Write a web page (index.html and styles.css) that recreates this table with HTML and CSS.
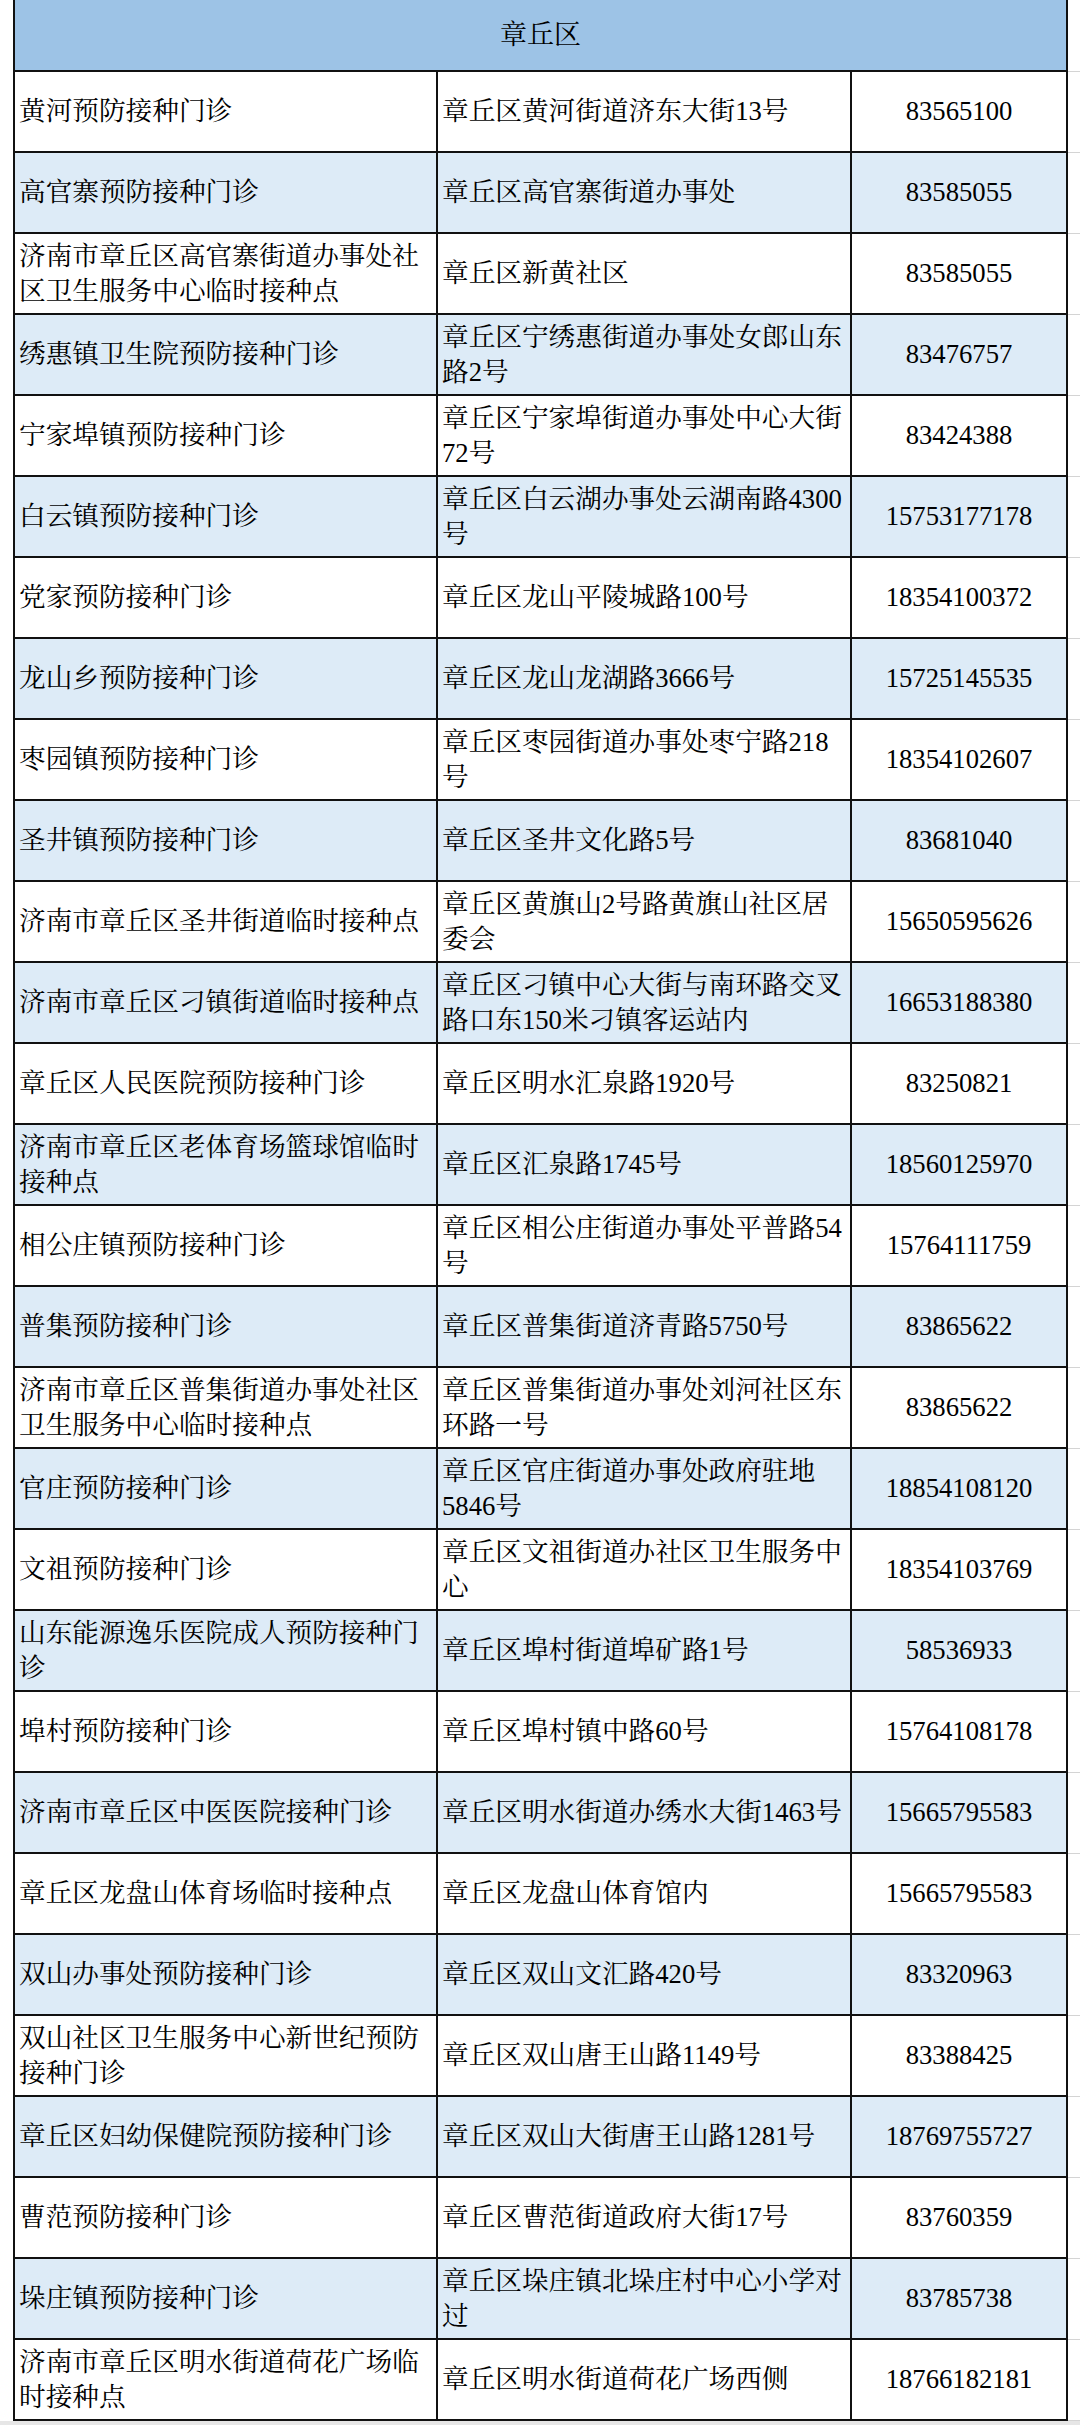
FILE: index.html
```html
<!DOCTYPE html>
<html lang="zh-CN">
<head>
<meta charset="utf-8">
<title>章丘区</title>
<link rel="stylesheet" href="styles.css">
</head>
<body>
<div class="sheet">
  <div class="gutter"></div>
  <table class="grid">
    <colgroup>
      <col class="c-name">
      <col class="c-addr">
      <col class="c-tel">
    </colgroup>
    <thead>
      <tr><th colspan="3" class="title">章丘区</th></tr>
    </thead>
    <tbody>
      <tr><td>黄河预防接种门诊</td><td>章丘区黄河街道济东大街13号</td><td class="tel">83565100</td></tr>
      <tr><td>高官寨预防接种门诊</td><td>章丘区高官寨街道办事处</td><td class="tel">83585055</td></tr>
      <tr><td>济南市章丘区高官寨街道办事处社区卫生服务中心临时接种点</td><td>章丘区新黄社区</td><td class="tel">83585055</td></tr>
      <tr><td>绣惠镇卫生院预防接种门诊</td><td>章丘区宁绣惠街道办事处女郎山东路2号</td><td class="tel">83476757</td></tr>
      <tr><td>宁家埠镇预防接种门诊</td><td>章丘区宁家埠街道办事处中心大街72号</td><td class="tel">83424388</td></tr>
      <tr><td>白云镇预防接种门诊</td><td>章丘区白云湖办事处云湖南路4300号</td><td class="tel">15753177178</td></tr>
      <tr><td>党家预防接种门诊</td><td>章丘区龙山平陵城路100号</td><td class="tel">18354100372</td></tr>
      <tr><td>龙山乡预防接种门诊</td><td>章丘区龙山龙湖路3666号</td><td class="tel">15725145535</td></tr>
      <tr><td>枣园镇预防接种门诊</td><td>章丘区枣园街道办事处枣宁路218号</td><td class="tel">18354102607</td></tr>
      <tr><td>圣井镇预防接种门诊</td><td>章丘区圣井文化路5号</td><td class="tel">83681040</td></tr>
      <tr><td>济南市章丘区圣井街道临时接种点</td><td>章丘区黄旗山2号路黄旗山社区居委会</td><td class="tel">15650595626</td></tr>
      <tr><td>济南市章丘区刁镇街道临时接种点</td><td>章丘区刁镇中心大街与南环路交叉路口东150米刁镇客运站内</td><td class="tel">16653188380</td></tr>
      <tr><td>章丘区人民医院预防接种门诊</td><td>章丘区明水汇泉路1920号</td><td class="tel">83250821</td></tr>
      <tr><td>济南市章丘区老体育场篮球馆临时接种点</td><td>章丘区汇泉路1745号</td><td class="tel">18560125970</td></tr>
      <tr><td>相公庄镇预防接种门诊</td><td>章丘区相公庄街道办事处平普路54号</td><td class="tel">15764111759</td></tr>
      <tr><td>普集预防接种门诊</td><td>章丘区普集街道济青路5750号</td><td class="tel">83865622</td></tr>
      <tr><td>济南市章丘区普集街道办事处社区卫生服务中心临时接种点</td><td>章丘区普集街道办事处刘河社区东环路一号</td><td class="tel">83865622</td></tr>
      <tr><td>官庄预防接种门诊</td><td>章丘区官庄街道办事处政府驻地5846号</td><td class="tel">18854108120</td></tr>
      <tr><td>文祖预防接种门诊</td><td>章丘区文祖街道办社区卫生服务中心</td><td class="tel">18354103769</td></tr>
      <tr><td>山东能源逸乐医院成人预防接种门诊</td><td>章丘区埠村街道埠矿路1号</td><td class="tel">58536933</td></tr>
      <tr><td>埠村预防接种门诊</td><td>章丘区埠村镇中路60号</td><td class="tel">15764108178</td></tr>
      <tr><td>济南市章丘区中医医院接种门诊</td><td>章丘区明水街道办绣水大街1463号</td><td class="tel">15665795583</td></tr>
      <tr><td>章丘区龙盘山体育场临时接种点</td><td>章丘区龙盘山体育馆内</td><td class="tel">15665795583</td></tr>
      <tr><td>双山办事处预防接种门诊</td><td>章丘区双山文汇路420号</td><td class="tel">83320963</td></tr>
      <tr><td>双山社区卫生服务中心新世纪预防接种门诊</td><td>章丘区双山唐王山路1149号</td><td class="tel">83388425</td></tr>
      <tr><td>章丘区妇幼保健院预防接种门诊</td><td>章丘区双山大街唐王山路1281号</td><td class="tel">18769755727</td></tr>
      <tr><td>曹范预防接种门诊</td><td>章丘区曹范街道政府大街17号</td><td class="tel">83760359</td></tr>
      <tr><td>垛庄镇预防接种门诊</td><td>章丘区垛庄镇北垛庄村中心小学对过</td><td class="tel">83785738</td></tr>
      <tr><td>济南市章丘区明水街道荷花广场临时接种点</td><td>章丘区明水街道荷花广场西侧</td><td class="tel">18766182181</td></tr>
    </tbody>
  </table>
  <div class="edge"></div>
</div>
<div class="foot"></div>
</body>
</html>
```
FILE: styles.css
```css
html, body {
  margin: 0;
  padding: 0;
  background: #ffffff;
}

body {
  width: 1080px;
  font-family: "Liberation Serif", "Noto Serif CJK SC", "Noto Sans CJK SC", serif;
  color: #000000;
}

.sheet {
  display: flex;
  align-items: stretch;
}

.gutter {
  width: 13px;
  flex: none;
}

.edge {
  flex: 1;
  background-image: repeating-linear-gradient(to bottom,
    transparent 0px, transparent 80px, #d4d4d4 80px, #d4d4d4 81px);
  background-position: 0 72px;
  background-repeat: repeat-y;
  background-size: 100% 81px;
}

.grid {
  flex: none;
  width: 1053px;
  border-collapse: collapse;
  table-layout: fixed;
  font-size: 26.67px;
}

.c-name { width: 423px; }
.c-addr { width: 414px; }
.c-tel  { width: 216px; }

.grid th,
.grid td {
  border: 2px solid #111111;
  padding: 0 2px 0 4px;
  line-height: 35px;
  vertical-align: middle;
  text-align: left;
  font-weight: normal;
}

.grid .title {
  height: 70px;
  background: #9dc3e6;
  text-align: center;
  font-size: 27px;
  padding: 0;
  border-top: none;
}

.grid tbody tr {
  height: 81px;
}

.grid tbody tr:nth-child(even) td {
  background: #ddebf7;
}

.grid td.tel {
  text-align: center;
  padding: 0;
}

.foot {
  height: 4px;
  background: #e6e6e6;
}
```
